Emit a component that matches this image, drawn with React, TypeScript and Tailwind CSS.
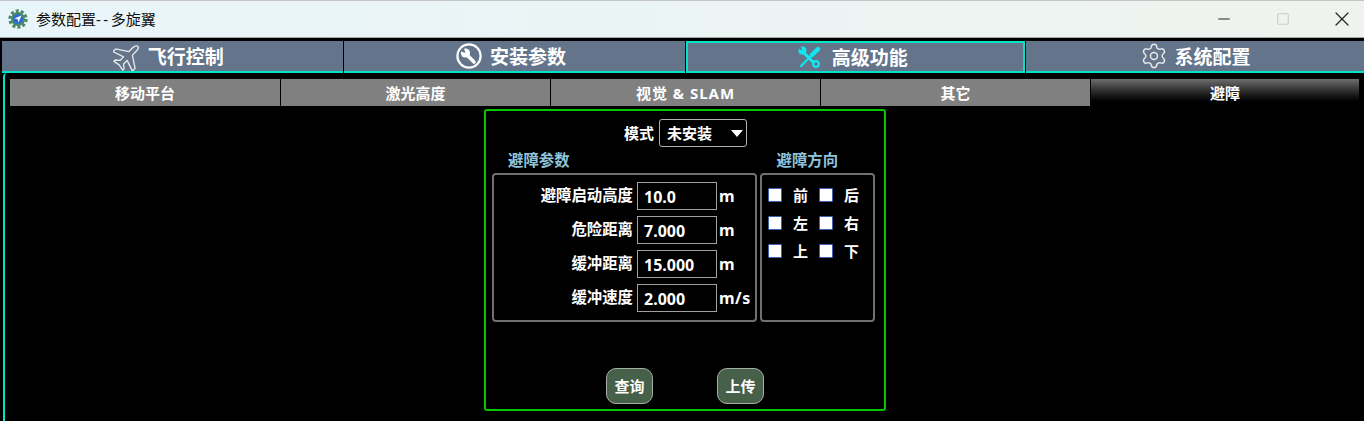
import { Minus, Settings, Square, X } from "lucide-react"

const font = "font-['Noto_Sans','Noto_Sans_CJK_SC',sans-serif]"

function AppIcon() {
  return (
    <svg width="20" height="20" viewBox="0 0 20 20">
      <circle cx="10" cy="10" r="8" fill="none" stroke="#4e8a68" strokeWidth="3.4" strokeDasharray="3 2.03" />
      <circle cx="10" cy="10" r="7" fill="#4e8a68" />
      <circle cx="10" cy="10" r="5" fill="#2a6fd0" />
      <path d="M6.5 9.5 13.5 6.5 10.5 13.5 9.7 10.3Z" fill="#fff" />
    </svg>
  )
}

function PlaneIcon() {
  return (
    <svg width="30" height="30" viewBox="0 0 24 24" fill="none" stroke="#e8e8e8" strokeWidth="1.1" strokeLinejoin="round">
      <path
        d="M12 1C13.2 1 14 3 14 5V9L23 15V18L14 15V19L17 21.5V23L12 22L7 23V21.5L10 19V15L1 18V15L10 9V5C10 3 10.8 1 12 1Z"
        transform="rotate(45 12 12)"
      />
    </svg>
  )
}

function WrenchCircle() {
  return (
    <svg width="26" height="26" viewBox="0 0 26 26">
      <circle cx="13" cy="13" r="11.6" fill="none" stroke="#fff" strokeWidth="2.2" />
      <path d="M10.5 11.5 18 19" stroke="#fff" strokeWidth="3.6" strokeLinecap="round" />
      <circle cx="9.5" cy="10" r="4.6" fill="#fff" />
      <path d="M9.5 10 L4 8 L7.6 4.2Z" fill="#64748b" />
    </svg>
  )
}

function ToolsIcon() {
  return (
    <svg width="24" height="24" viewBox="0 0 24 24" fill="none" stroke="#0fe8ee">
      <path d="M21 4 15 10" strokeWidth="4.4" strokeLinecap="round" />
      <path d="M15 10 4 21" strokeWidth="2.2" strokeLinecap="round" />
      <path d="M6 7 17 18" strokeWidth="3" />
      <circle cx="5.4" cy="5.6" r="4" fill="#0fe8ee" stroke="none" />
      <path d="M5.4 5.6 1 3.4 3.4 1Z" fill="#64748b" stroke="none" />
      <circle cx="19" cy="19" r="2.8" strokeWidth="2.2" />
    </svg>
  )
}

function MainTab({ label, icon, active, className }: { label: string; icon: React.ReactNode; active?: boolean; className: string }) {
  return (
    <div
      className={`flex h-[32px] items-center justify-center bg-[#64748b] text-[19px] leading-none font-bold text-white ${className} ${
        active ? "border-2 border-[#00e5c8]" : "border-b-2 border-[#00e5c8]"
      }`}
    >
      {icon}
      <span className="pt-[2px]">{label}</span>
    </div>
  )
}

function SubTab({ label, active, className }: { label: string; active?: boolean; className: string }) {
  return (
    <div
      className={`flex h-[27px] items-center justify-center pt-[1px] text-[15px] font-bold text-white ${className} ${
        active ? "bg-gradient-to-b from-[#6e6e6e] to-black" : "bg-[#808080]"
      }`}
    >
      {label}
    </div>
  )
}

function ParamRow({ label, value, unit }: { label: string; value: string; unit: string }) {
  return (
    <div className="flex h-[28px] items-center">
      <span className="w-[143px] pr-[4px] text-right text-[15.4px] font-bold text-white">{label}</span>
      <div className="flex h-[28px] w-[80px] items-center border border-[#a0a0a0] pt-[1px] pl-[6px] text-[16px] font-bold text-white">{value}</div>
      <span className="pl-[2px] text-[16px] font-bold tracking-[0.5px] text-white">{unit}</span>
    </div>
  )
}

function Check({ label }: { label: string }) {
  return (
    <div className="flex h-[14px] w-[51px] items-center">
      <span className="h-[14px] w-[14px] rounded-[1px] border border-[#3f5fb0] bg-white" />
      <span className="pl-[11px] text-[15px] font-bold text-white">{label}</span>
    </div>
  )
}

function ActionButton({ label }: { label: string }) {
  return (
    <div className="flex h-[36px] w-[47px] items-center justify-center rounded-[10px] border border-[#a5b0a5] bg-[#46604a] text-[15px] font-bold text-white">
      {label}
    </div>
  )
}

export default function App() {
  return (
    <div className={`flex h-[421px] w-[1364px] flex-col overflow-hidden bg-black ${font}`}>
      <div className="flex h-[38px] items-center justify-between border-t border-b border-t-[#c4c4c4] border-b-[#a8a8a8] bg-gradient-to-r from-[#e8f5fa] to-[#eff3ee] pl-[8px]">
        <div className="flex items-center gap-[8px] text-[15px] text-[#111]">
          <AppIcon />
          <span>
            参数配置<span className="tracking-[2.5px]">--</span>多旋翼
          </span>
        </div>
        <div className="flex items-center">
          <Minus size={18} strokeWidth={1.5} className="mr-[43px] text-[#222]" />
          <Square size={14} strokeWidth={2} className="mr-[40px] text-[#cccccc]" />
          <X size={24} strokeWidth={1.2} className="mr-[10px] text-[#222]" />
        </div>
      </div>

      <div className="mt-[3px] flex gap-px pl-[2px]">
        <MainTab className="w-[341px] gap-[5px] pr-[8px]" label="飞行控制" icon={<PlaneIcon />} />
        <MainTab className="w-[341px] gap-[8px] pr-[6px]" label="安装参数" icon={<WrenchCircle />} />
        <MainTab className="w-[340px] gap-[11px] pr-[6px]" active label="高级功能" icon={<ToolsIcon />} />
        <MainTab className="w-[338px] gap-[7px]" label="系统配置" icon={<Settings size={28} strokeWidth={1.25} className="text-[#e8e8e8]" />} />
      </div>

      <div className="ml-[3px] flex-1 rounded-tl-[4px] border-l-2 border-[#00e5c8] pt-[6px] pl-[5px]">
        <div className="flex gap-px">
          <SubTab className="w-[270px]" label="移动平台" />
          <SubTab className="w-[269px]" label="激光高度" />
          <SubTab className="w-[269px] tracking-[1px]" label="视觉 & SLAM" />
          <SubTab className="w-[269px]" label="其它" />
          <SubTab className="w-[268px]" label="避障" active />
        </div>

        <div className="mt-[3px] ml-[474px] flex h-[302px] w-[402px] flex-col rounded-[3px] border-2 border-[#00c800] pt-[8px]">
          <div className="flex items-center pl-[138px]">
            <span className="pr-[5px] text-[15px] font-bold text-white">模式</span>
            <div className="flex h-[28px] w-[88px] items-center justify-between rounded-[3px] border border-[#b0b0b0] pr-[3px] pl-[7px] text-[15px] font-bold text-white">
              未安装
              <svg width="12" height="7" viewBox="0 0 12 7">
                <path d="M0 0H12L6 7Z" fill="#fff" />
              </svg>
            </div>
          </div>

          <div className="mt-[5px] flex h-[18px] text-[15.4px] leading-[18px] font-bold text-[#8fc4dc]">
            <span className="pl-[22px]">避障参数</span>
            <span className="pl-[207px]">避障方向</span>
          </div>

          <div className="mt-[3px] flex gap-[3px] pl-[6px]">
            <div className="flex h-[149px] w-[265px] flex-col gap-[6px] rounded-[4px] border-2 border-[#707070] pt-[7px]">
              <ParamRow label="避障启动高度" value="10.0" unit="m" />
              <ParamRow label="危险距离" value="7.000" unit="m" />
              <ParamRow label="缓冲距离" value="15.000" unit="m" />
              <ParamRow label="缓冲速度" value="2.000" unit="m/s" />
            </div>
            <div className="flex h-[149px] w-[115px] flex-col gap-[14px] rounded-[4px] border-2 border-[#707070] pt-[13px] pl-[6px]">
              <div className="flex">
                <Check label="前" />
                <Check label="后" />
              </div>
              <div className="flex">
                <Check label="左" />
                <Check label="右" />
              </div>
              <div className="flex">
                <Check label="上" />
                <Check label="下" />
              </div>
            </div>
          </div>

          <div className="mt-[46px] flex gap-[64px] pl-[120px]">
            <ActionButton label="查询" />
            <ActionButton label="上传" />
          </div>
        </div>
      </div>
    </div>
  )
}
